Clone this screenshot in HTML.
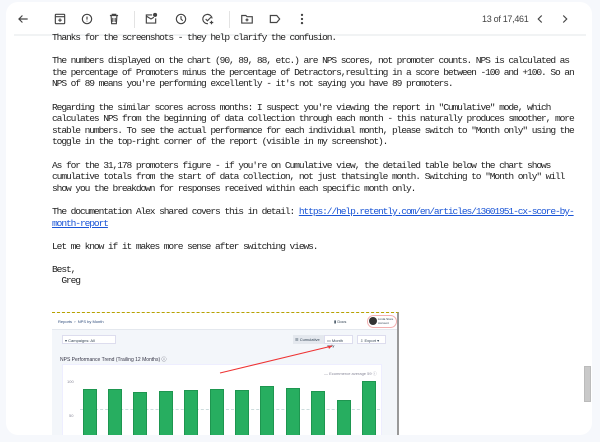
<!DOCTYPE html>
<html><head><meta charset="utf-8"><style>
*{margin:0;padding:0;box-sizing:border-box}
body{width:600px;height:442px;background:#f6f8fc;position:relative;overflow:hidden;font-family:"Liberation Sans",sans-serif}
.card{position:absolute;left:6px;top:2px;width:586px;height:433px;background:#fff;border-radius:12px}
.ic{position:absolute;top:10px;width:14px;height:14px}
.div{position:absolute;top:9px;width:1px;height:17px;background:#e3e3e3}
.hr{position:absolute;left:8px;top:32px;width:572px;height:2px;background:#f1f3f4}
.cnt{position:absolute;left:476px;top:12px;font-size:9px;color:#444;letter-spacing:-0.3px}
.txt{position:absolute;left:52px;top:32px;width:540px;font-family:"Liberation Mono",monospace;font-size:9.6px;letter-spacing:-1.1px;line-height:11.6px;color:#222;white-space:pre}
.txt a{color:#1a55d6;text-decoration:underline}
.img{position:absolute;left:52px;top:312px;width:347px;height:123px;background:#f3f6fa;border-top:1px dashed #b8a200;border-right:2px solid #999;overflow:hidden;font-size:4px;color:#345}
.sb{position:absolute;left:584px;top:366px;width:7px;height:36px;background:#c9c9c9;border:1px solid #bbb}
.bar{position:absolute;width:14px;background:#27ae60;border:1px solid #1e9650;bottom:0}
</style></head><body>
<div class="card">
<svg class="ic" style="left:10px" viewBox="0 0 24 24" fill="none" stroke="#444" stroke-width="2"><path d="M20 12H5M11 6l-6 6 6 6"/></svg>
<svg class="ic" style="left:47px" viewBox="0 0 24 24" fill="none" stroke="#444" stroke-width="2"><rect x="4" y="4" width="16" height="16" rx="1"/><path d="M4 8h16M12 11v6M9 14h6"/></svg>
<svg class="ic" style="left:74px" viewBox="0 0 24 24" fill="none" stroke="#444" stroke-width="2"><circle cx="12" cy="12" r="8"/><path d="M12 8v5M12 15v1"/></svg>
<svg class="ic" style="left:101px" viewBox="0 0 24 24" fill="none" stroke="#444" stroke-width="2"><path d="M5 6h14M9 6V4h6v2M7 6l1 14h8l1-14M10 10v7M14 10v7"/></svg>
<div class="div" style="left:128px"></div>
<svg class="ic" style="left:138px" viewBox="0 0 24 24" fill="none" stroke="#444" stroke-width="2"><path d="M14 5H4v14h16v-8M4 7l8 5 5-3"/><circle cx="19" cy="5" r="2.5" fill="#444"/></svg>
<svg class="ic" style="left:168px" viewBox="0 0 24 24" fill="none" stroke="#444" stroke-width="2"><circle cx="12" cy="12" r="8"/><path d="M12 7v5l3 3"/></svg>
<svg class="ic" style="left:195px" viewBox="0 0 24 24" fill="none" stroke="#444" stroke-width="2"><path d="M19 11a8 8 0 1 0-7 9M8 12l3 3 6-6M18 15v6M15 18h6"/></svg>
<div class="div" style="left:223px"></div>
<svg class="ic" style="left:234px" viewBox="0 0 24 24" fill="none" stroke="#444" stroke-width="2"><path d="M3 6h7l2 2h9v11H3zM12 11v5M9.5 13.5h5"/></svg>
<svg class="ic" style="left:262px" viewBox="0 0 24 24" fill="none" stroke="#444" stroke-width="2"><path d="M4 6h11l5 6-5 6H4z"/></svg>
<svg class="ic" style="left:289px" viewBox="0 0 24 24" fill="#444"><circle cx="12" cy="5" r="2"/><circle cx="12" cy="12" r="2"/><circle cx="12" cy="19" r="2"/></svg>
<div class="cnt">13 of 17,461</div>
<svg class="ic" style="left:527px" viewBox="0 0 24 24" fill="none" stroke="#444" stroke-width="2"><path d="M15 6l-6 6 6 6"/></svg>
<svg class="ic" style="left:552px" viewBox="0 0 24 24" fill="none" stroke="#444" stroke-width="2"><path d="M9 6l6 6-6 6"/></svg>
<div class="hr"></div>
</div>
<div class="txt">Thanks for the screenshots - they help clarify the confusion.

The numbers displayed on the chart (90, 89, 88, etc.) are NPS scores, not promoter counts. NPS is calculated as
the percentage of Promoters minus the percentage of Detractors,resulting in a score between -100 and +100. So an
NPS of 89 means you're performing excellently - it's not saying you have 89 promoters.

Regarding the similar scores across months: I suspect you're viewing the report in "Cumulative" mode, which
calculates NPS from the beginning of data collection through each month - this naturally produces smoother, more
stable numbers. To see the actual performance for each individual month, please switch to "Month only" using the
toggle in the top-right corner of the report (visible in my screenshot).

As for the 31,178 promoters figure - if you're on Cumulative view, the detailed table below the chart shows
cumulative totals from the start of data collection, not just thatsingle month. Switching to "Month only" will
show you the breakdown for responses received within each specific month only.

The documentation Alex shared covers this in detail: <a>https://help.retently.com/en/articles/13601951-cx-score-by-</a>
<a>month-report</a>

Let me know if it makes more sense after switching views.

Best,
  Greg</div>
<div class="img">
<div style="position:absolute;left:0;top:0;width:347px;height:17px;background:#fff;border-bottom:1px solid #e4e8ee"></div>
<div style="position:absolute;left:6px;top:6px;color:#2c4a7a">Reports &nbsp;›&nbsp; NPS by Month</div>
<div style="position:absolute;left:282px;top:6px">▮ Docs</div>
<div style="position:absolute;left:315px;top:2px;width:30px;height:13px;border:1px solid #f3b0b0;border-radius:7px"></div>
<div style="position:absolute;left:317px;top:4px;width:8px;height:8px;border-radius:50%;background:#333"></div>
<div style="position:absolute;left:326px;top:4px;font-size:3px">Linda Store<br>Account</div>
<div style="position:absolute;left:10px;top:22px;width:54px;height:9px;background:#fff;border:1px solid #dde;padding:2px">▾ Campaigns: All</div>
<div style="position:absolute;left:241px;top:22px;width:31px;height:9px;background:#e4e8ee;padding:2px">☰ Cumulative</div>
<div style="position:absolute;left:272px;top:22px;width:29px;height:9px;background:#fff;border:1px solid #dde;padding:2px">▭ Month only</div>
<div style="position:absolute;left:305px;top:22px;width:29px;height:9px;background:#fff;border:1px solid #dde;padding:2px">⇩ Export ▾</div>
<div style="position:absolute;left:8px;top:43px;font-size:5px;color:#334">NPS Performance Trend (Trailing 12 Months) ⓘ</div>
<div style="position:absolute;left:10px;top:51px;width:320px;height:80px;background:#fff;border:1px solid #eef"></div>
<div style="position:absolute;left:272px;top:58px;color:#889">— Ecommerce average 59 ⓘ</div>
<div style="position:absolute;left:15px;top:66px;color:#889">100</div>
<div style="position:absolute;left:17px;top:100px;color:#889">50</div>
<div style="position:absolute;left:28px;top:96px;width:300px;border-top:1px dashed #cdd"></div>
<svg style="position:absolute;left:0;top:0" width="347" height="123"><line x1="168" y1="60" x2="280" y2="33" stroke="#e33" stroke-width="1"/><path d="M280 33l-4 0l1 3z" fill="#e33"/></svg>
<div style="position:absolute;left:0;top:0;width:347px;height:123px">
<div class="bar" style="left:31px;height:47px"></div>
<div class="bar" style="left:56px;height:47px"></div>
<div class="bar" style="left:81px;height:44px"></div>
<div class="bar" style="left:107px;height:45px"></div>
<div class="bar" style="left:132px;height:46px"></div>
<div class="bar" style="left:158px;height:47px"></div>
<div class="bar" style="left:183px;height:46px"></div>
<div class="bar" style="left:208px;height:50px"></div>
<div class="bar" style="left:234px;height:48px"></div>
<div class="bar" style="left:259px;height:45px"></div>
<div class="bar" style="left:285px;height:36px"></div>
<div class="bar" style="left:310px;height:55px"></div>
</div>
</div>
<div class="sb"></div>
</body></html>
